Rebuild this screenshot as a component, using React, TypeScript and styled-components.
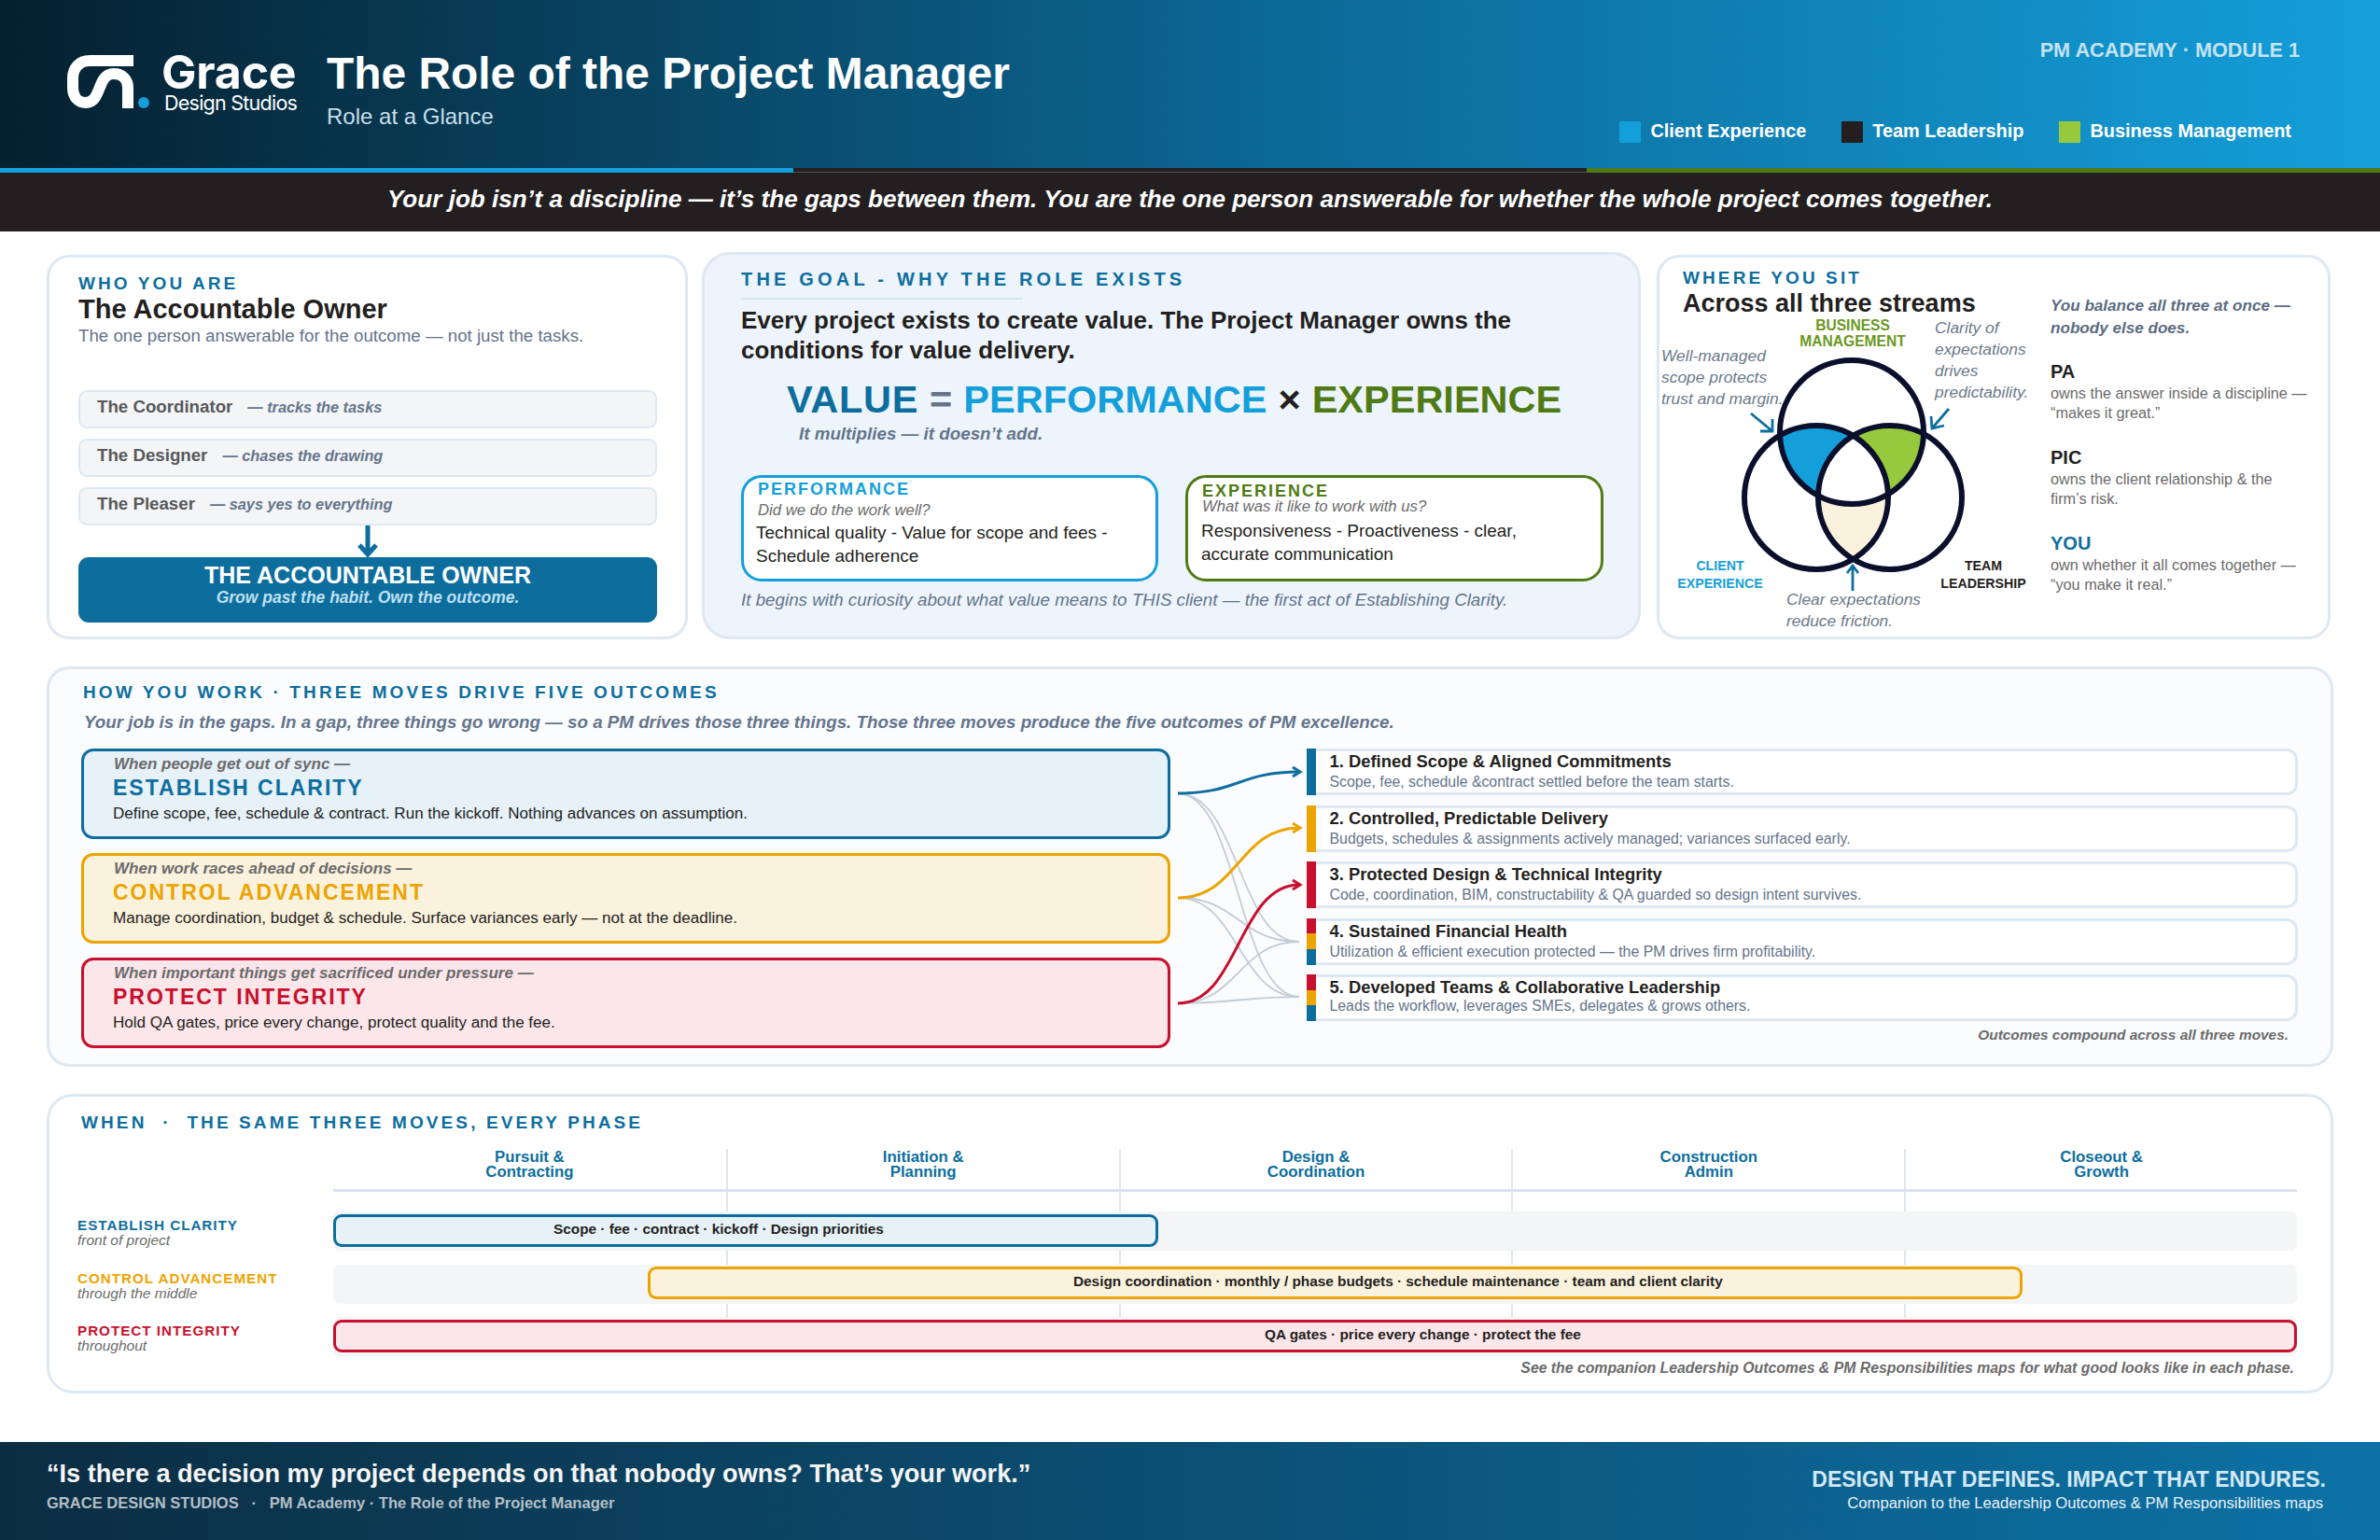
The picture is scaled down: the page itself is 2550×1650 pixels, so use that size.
import React from "react";
import styled, { createGlobalStyle } from "styled-components";

const colours = {
  ink: "#231f20",
  navy: "#0d6e9e",
  sky: "#149fdb",
  green: "#4f7a15",
  lime: "#97c93d",
  amber: "#eca400",
  red: "#c8102e",
  line: "#dde8f3",
  slate: "#64748b",
  grey: "#6b6b6b",
};

const GlobalStyle = createGlobalStyle`
  html, body {
    margin: 0;
    padding: 0;
    background: white;
  }
  * {
    box-sizing: border-box;
  }
  body {
    font-family: "Liberation Sans", Arial, sans-serif;
    color: ${colours.ink};
  }
`;

const Page = styled.div`
  width: 2550px;
  height: 1650px;
  display: flex;
  flex-direction: column;
  overflow: hidden;
`;

const Header = styled.header`
  height: 180px;
  display: flex;
  justify-content: space-between;
  padding: 0 86px 0 70px;
  background: linear-gradient(90deg, #05202f 0%, #0c6a98 55%, #149fdb 100%);
`;

const HeaderLeft = styled.div`
  display: flex;
  padding-top: 56px;
`;

const LogoMark = styled.svg`
  width: 92px;
  height: 62px;
  flex: none;
`;

const Brand = styled.div`
  width: 177px;
  margin-left: 11px;
  color: white;
`;

const BrandName = styled.div`
  font-family: Inter, sans-serif;
  font-weight: 700;
  font-size: 50px;
  line-height: 42px;
  letter-spacing: -0.2px;
`;

const BrandSub = styled.div`
  font-family: Inter, sans-serif;
  font-size: 21.5px;
  line-height: 24px;
  letter-spacing: -0.75px;
  padding-left: 3px;
`;

const TitleBlock = styled.div`
  margin-top: -7px;
`;

const PageTitle = styled.h1`
  margin: 0;
  color: white;
  font-size: 47.9px;
  line-height: 60px;
  font-weight: 700;
`;

const PageSub = styled.div`
  margin-top: 2px;
  font-size: 24px;
  line-height: 28px;
  color: #c8dfeb;
`;

const HeaderRight = styled.div`
  display: flex;
  flex-direction: column;
  align-items: flex-end;
  padding-top: 41px;
`;

const Module = styled.div`
  font-size: 21.7px;
  line-height: 26px;
  font-weight: 700;
  color: #c5e3f3;
`;

const Legend = styled.div`
  display: flex;
  gap: 38px;
  margin: 62px 9px 0 0;
`;

const LegendItem = styled.div`
  display: flex;
  gap: 10px;
  color: white;
  font-size: 19.9px;
  font-weight: 700;
  line-height: 22px;
`;

const Swatch = styled.span<{ $color: string }>`
  width: 23px;
  height: 23px;
  margin-top: 1px;
  background: ${(p) => p.$color};
`;

const Stripe = styled.div`
  height: 5px;
  display: grid;
  grid-template-columns: 1fr 1fr 1fr;
`;

const StripePart = styled.div<{ $color: string; $edge?: boolean }>`
  background: ${(p) => p.$color};
  border-bottom: ${(p) => (p.$edge ? "1px solid #4f4f4f" : "0")};
`;

const Tagline = styled.div`
  height: 63px;
  padding-bottom: 6px;
  background: ${colours.ink};
  color: white;
  font-size: 26.1px;
  font-weight: 700;
  font-style: italic;
  display: flex;
  align-items: center;
  justify-content: center;
`;

const Main = styled.main`
  flex: 1;
  padding: 22px 50px 0;
  display: flex;
  flex-direction: column;
  gap: 29px;
`;

const TopRow = styled.section`
  display: grid;
  grid-template-columns: 687px 1006px 724px;
  column-gap: 15px;
  align-items: end;
  height: 415px;
  & > :nth-child(3) {
    margin-left: 2px;
  }
`;

const Card = styled.div<{ $height: number; $bg?: string; $radius?: number }>`
  height: ${(p) => p.$height}px;
  border: 3px solid ${colours.line};
  border-radius: ${(p) => p.$radius ?? 24}px;
  background: ${(p) => p.$bg ?? "white"};
`;

const Eyebrow = styled.div<{ $wide?: boolean }>`
  font-size: ${(p) => (p.$wide ? 20 : 19)}px;
  line-height: 22px;
  font-weight: 700;
  letter-spacing: ${(p) => (p.$wide ? 4.2 : 3.1)}px;
  color: ${colours.navy};
`;

const CardTitle = styled.h2`
  margin: 0;
  font-size: 29px;
  line-height: 33px;
  font-weight: 700;
  color: ${colours.ink};
`;

const SitTitle = styled(CardTitle)`
  font-size: 27px;
`;

const WhoBody = styled.div`
  padding: 17px 30px 0 31px;
`;

const WhoSub = styled.div`
  font-size: 18.7px;
  line-height: 24px;
  color: ${colours.slate};
`;

const HabitList = styled.div`
  display: flex;
  flex-direction: column;
  gap: 11px;
  margin-top: 46px;
`;

const Habit = styled.div`
  height: 41px;
  padding: 0 0 5px 18px;
  border: 2px solid ${colours.line};
  border-radius: 9px;
  background: #f3f5f7;
  display: flex;
  align-items: center;
  gap: 16px;
`;

const HabitName = styled.span`
  font-size: 18.7px;
  font-weight: 700;
  color: #58595b;
`;

const HabitNote = styled.span`
  font-size: 16.3px;
  font-weight: 700;
  font-style: italic;
  color: ${colours.slate};
`;

const DownArrow = styled.svg`
  display: block;
  margin: 0 auto;
  width: 26px;
  height: 34px;
`;

const OwnerBlock = styled.div`
  height: 70px;
  padding-top: 6px;
  border-radius: 11px;
  background: ${colours.navy};
  text-align: center;
`;

const OwnerTitle = styled.div`
  color: white;
  font-size: 25px;
  line-height: 26px;
  font-weight: 700;
`;

const OwnerSub = styled.div`
  color: #bfe0f2;
  font-size: 17.5px;
  line-height: 22px;
  font-weight: 700;
  font-style: italic;
`;

const GoalBody = styled.div`
  padding: 15px 37px 0 39px;
`;

const Rule = styled.div`
  width: 302px;
  height: 2px;
  margin-top: 9px;
  background: #d5e4f0;
`;

const Statement = styled.p`
  margin: 6px 0 0;
  font-size: 26px;
  line-height: 32px;
  font-weight: 700;
`;

const Equation = styled.div`
  display: flex;
  gap: 12px;
  margin-top: 12px;
  padding-left: 49px;
  font-size: 41.5px;
  line-height: 50px;
  font-weight: 700;
`;

const Term = styled.span<{ $color: string; $spaced?: boolean }>`
  color: ${(p) => p.$color};
  letter-spacing: ${(p) => (p.$spaced ? 0.7 : 0)}px;
`;

const Multiplies = styled.div`
  padding-left: 62px;
  font-size: 18.8px;
  line-height: 24px;
  font-weight: 700;
  font-style: italic;
  color: ${colours.slate};
`;

const SubCards = styled.div`
  display: grid;
  grid-template-columns: 447px 448px;
  column-gap: 29px;
  margin-top: 32px;
`;

const SubCard = styled.div<{ $color: string; $tight?: boolean }>`
  height: 114px;
  padding: ${(p) => (p.$tight ? 5 : 3)}px 16px 0 15px;
  border: 3px solid ${(p) => p.$color};
  border-radius: 22px;
  background: white;
`;

const SubTitle = styled.div<{ $color: string }>`
  color: ${(p) => p.$color};
  font-size: 18px;
  line-height: 18px;
  font-weight: 700;
  letter-spacing: 2px;
`;

const SubQuestion = styled.div<{ $tight?: boolean }>`
  margin-top: ${(p) => (p.$tight ? -2 : 3.5)}px;
  font-size: 16.7px;
  line-height: 20px;
  font-style: italic;
  color: ${colours.grey};
`;

const SubText = styled.div<{ $tight?: boolean }>`
  margin: ${(p) => (p.$tight ? 3 : 1.5)}px 0 0 ${(p) => (p.$tight ? -1 : -2)}px;
  font-size: 19px;
  line-height: 25px;
`;

const GoalNote = styled.div`
  margin-top: 8px;
  font-size: 18.8px;
  line-height: 24px;
  font-style: italic;
  color: ${colours.slate};
`;

const SitLayout = styled.div`
  display: grid;
  grid-template-columns: 419px 1fr;
  height: 100%;
`;

const SitHeading = styled.div`
  padding: 11px 0 0 25px;
`;

const VennCanvas = styled.div`
  position: relative;
  height: 341px;
`;

const VennDrawing = styled.svg`
  position: absolute;
  left: 0;
  top: 0;
  width: 419px;
  height: 341px;
`;

const VennLabel = styled.div<{ $x: number; $y: number; $color: string; $size: number; $lead: number }>`
  position: absolute;
  left: ${(p) => p.$x}px;
  top: ${(p) => p.$y}px;
  transform: translateX(-50%);
  text-align: center;
  white-space: nowrap;
  color: ${(p) => p.$color};
  font-size: ${(p) => p.$size}px;
  line-height: ${(p) => p.$lead}px;
  font-weight: 700;
`;

const VennNote = styled.div<{ $x: number; $y: number }>`
  position: absolute;
  left: ${(p) => p.$x}px;
  top: ${(p) => p.$y}px;
  white-space: nowrap;
  color: #6b7a8a;
  font-size: 17.4px;
  line-height: 23px;
  font-style: italic;
`;

const Roles = styled.div`
  padding-top: 40px;
`;

const Balance = styled.div`
  margin-bottom: 23px;
  font-size: 17.1px;
  line-height: 23.5px;
  font-weight: 700;
  font-style: italic;
  color: #5b6b7f;
`;

const Role = styled.div`
  margin-bottom: 25px;
`;

const RoleName = styled.div<{ $color?: string }>`
  font-size: 20px;
  line-height: 24px;
  font-weight: 700;
  color: ${(p) => p.$color ?? colours.ink};
`;

const RoleText = styled.div`
  margin-top: 1px;
  font-size: 16.25px;
  line-height: 21px;
  color: ${colours.grey};
`;

const WorkBody = styled.div`
  padding: 14px 26px 0 34px;
`;

const Indented = styled.div`
  margin-left: 2px;
`;

const WorkLead = styled.div`
  margin: 9px 0 0 3px;
  font-size: 18.76px;
  line-height: 24px;
  font-weight: 700;
  font-style: italic;
  color: ${colours.slate};
`;

const WorkGrid = styled.div`
  display: grid;
  grid-template-columns: 1167px 146px 1062px;
  margin-top: 16px;
`;

const Moves = styled.div`
  display: flex;
  flex-direction: column;
  gap: 15px;
`;

const Move = styled.div<{ $color: string; $bg: string }>`
  height: 97px;
  padding: 3px 0 0 31px;
  border: 3px solid ${(p) => p.$color};
  border-radius: 13px;
  background: ${(p) => p.$bg};
`;

const MoveWhen = styled.div`
  padding-left: 1px;
  font-size: 17px;
  line-height: 22px;
  font-weight: 700;
  font-style: italic;
  color: ${colours.grey};
`;

const MoveTitle = styled.div<{ $color: string }>`
  color: ${(p) => p.$color};
  font-size: 23px;
  line-height: 28px;
  font-weight: 700;
  letter-spacing: 2px;
`;

const MoveText = styled.div`
  margin-top: 2px;
  font-size: 17.06px;
  line-height: 24px;
`;

const Connectors = styled.svg`
  display: block;
  width: 146px;
  height: 321px;
`;

const OutcomeList = styled.div`
  display: flex;
  flex-direction: column;
  gap: 10.5px;
`;

const Outcome = styled.div`
  height: 50px;
  display: flex;
`;

const OutcomeBar = styled.div`
  width: 9.5px;
  flex: none;
  display: flex;
  flex-direction: column;
`;

const BarPart = styled.div<{ $color: string }>`
  flex: 1;
  background: ${(p) => p.$color};
`;

const OutcomeCard = styled.div`
  flex: 1;
  padding-left: 15px;
  border: 3px solid ${colours.line};
  border-left: 0;
  border-radius: 0 12px 12px 0;
  background: white;
`;

const OutcomeTitle = styled.div`
  font-size: 18.4px;
  line-height: 22px;
  font-weight: 700;
`;

const OutcomeText = styled.div<{ $tight?: boolean }>`
  margin-top: ${(p) => (p.$tight ? -1 : 1)}px;
  font-size: 15.85px;
  line-height: 20px;
  color: ${colours.slate};
`;

const RightNote = styled.div<{ $right: number; $size: number }>`
  padding-right: ${(p) => p.$right}px;
  text-align: right;
  font-size: ${(p) => p.$size}px;
  line-height: 22px;
  font-weight: 700;
  font-style: italic;
  color: ${colours.grey};
`;

const OutcomeNote = styled(RightNote)`
  margin-top: 4px;
`;

const WhenBody = styled.div`
  padding: 17px 0 0 29px;
`;

const WhenTitle = styled(Eyebrow)`
  margin-left: 5px;
  white-space: pre;
`;

const Timeline = styled.div`
  display: grid;
  grid-template-columns: 275px 2104px;
  margin-top: 17px;
`;

const PhaseHead = styled.div`
  grid-column: 2;
  display: grid;
  grid-template-columns: repeat(5, 1fr);
  height: 46px;
  border-bottom: 3px solid #d5e4f0;
`;

const Phase = styled.div<{ $first?: boolean }>`
  padding-top: 1px;
  border-left: ${(p) => (p.$first ? "0" : "2px solid #dfe6ee")};
  text-align: center;
  white-space: pre-line;
  color: ${colours.navy};
  font-size: 16.8px;
  line-height: 15.5px;
  font-weight: 700;
`;

const RowLabels = styled.div`
  display: flex;
  flex-direction: column;
  gap: 14.5px;
  padding-top: 21px;
`;

const RowLabel = styled.div`
  height: 42px;
  padding: 7px 0 0 1px;
`;

const RowName = styled.div<{ $color: string }>`
  color: ${(p) => p.$color};
  font-size: 15.2px;
  line-height: 16px;
  font-weight: 700;
  letter-spacing: 1px;
`;

const RowSub = styled.div`
  font-size: 15.5px;
  line-height: 16px;
  font-style: italic;
  color: ${colours.grey};
`;

const TrackArea = styled.div`
  position: relative;
  display: flex;
  flex-direction: column;
  gap: 14.5px;
  padding-top: 21px;
`;

const GridLines = styled.div`
  position: absolute;
  inset: 0;
  display: grid;
  grid-template-columns: repeat(5, 1fr);
`;

const GridLine = styled.div<{ $first?: boolean }>`
  border-left: ${(p) => (p.$first ? "0" : "2px solid #dfe6ee")};
`;

const Track = styled.div`
  position: relative;
  height: 42px;
  padding-top: 2.5px;
  border-radius: 7px;
  background: #f3f5f7;
`;

const PhaseBar = styled.div<{ $left: number; $width: number; $pad: number; $color: string; $bg: string }>`
  width: ${(p) => p.$width}px;
  height: 35px;
  margin-left: ${(p) => p.$left}px;
  padding: 0 0 3px ${(p) => p.$pad}px;
  border: 3px solid ${(p) => p.$color};
  border-radius: 9px;
  background: ${(p) => p.$bg};
  display: flex;
  align-items: center;
  font-size: 15.35px;
  font-weight: 700;
`;

const WhenNote = styled(RightNote)`
  margin-top: 2px;
`;

const Footer = styled.footer`
  height: 105px;
  display: flex;
  justify-content: space-between;
  padding: 0 58px 0 50px;
  background: linear-gradient(90deg, #0b2d42 0%, #0c72a6 100%);
`;

const FootLeft = styled.div`
  padding-top: 16px;
`;

const FootQuote = styled.div`
  color: #f5f5f5;
  font-size: 27.1px;
  line-height: 36px;
  font-weight: 700;
`;

const FootMeta = styled.div`
  margin-top: 3px;
  white-space: pre;
  color: #b4bfc6;
  font-size: 16.55px;
  line-height: 22px;
  font-weight: 700;
`;

const FootRight = styled.div`
  padding-top: 25px;
  text-align: right;
`;

const FootMotto = styled.div`
  color: #d3e8f4;
  font-size: 23px;
  line-height: 30px;
  font-weight: 700;
`;

const FootCompanion = styled.div`
  margin: 0 3px 0 0;
  color: #e8f2f8;
  font-size: 16.65px;
  line-height: 22px;
`;

const legend = [
  { label: "Client Experience", color: colours.sky },
  { label: "Team Leadership", color: colours.ink },
  { label: "Business Management", color: colours.lime },
];

const habits = [
  { name: "The Coordinator", note: "— tracks the tasks" },
  { name: "The Designer", note: "— chases the drawing" },
  { name: "The Pleaser", note: "— says yes to everything" },
];

const roles = [
  {
    name: "PA",
    text: ["owns the answer inside a discipline —", "“makes it great.”"],
  },
  {
    name: "PIC",
    text: ["owns the client relationship & the", "firm’s risk."],
  },
  {
    name: "YOU",
    color: colours.navy,
    text: ["own whether it all comes together —", "“you make it real.”"],
  },
];

const moves = [
  {
    when: "When people get out of sync —",
    title: "ESTABLISH CLARITY",
    text: "Define scope, fee, schedule & contract. Run the kickoff. Nothing advances on assumption.",
    color: colours.navy,
    bg: "#e6f1f8",
  },
  {
    when: "When work races ahead of decisions —",
    title: "CONTROL ADVANCEMENT",
    text: "Manage coordination, budget & schedule. Surface variances early — not at the deadline.",
    color: colours.amber,
    bg: "#fbf2de",
  },
  {
    when: "When important things get sacrificed under pressure —",
    title: "PROTECT INTEGRITY",
    text: "Hold QA gates, price every change, protect quality and the fee.",
    color: colours.red,
    bg: "#fbe6ea",
  },
];

const allMoves = [colours.red, colours.amber, colours.navy];

const outcomes = [
  {
    title: "1. Defined Scope & Aligned Commitments",
    text: "Scope, fee, schedule &contract settled before the team starts.",
    bars: [colours.navy],
  },
  {
    title: "2. Controlled, Predictable Delivery",
    text: "Budgets, schedules & assignments actively managed; variances surfaced early.",
    bars: [colours.amber],
  },
  {
    title: "3. Protected Design & Technical Integrity",
    text: "Code, coordination, BIM, constructability & QA guarded so design intent survives.",
    bars: [colours.red],
  },
  {
    title: "4. Sustained Financial Health",
    text: "Utilization & efficient execution protected — the PM drives firm profitability.",
    bars: allMoves,
  },
  {
    title: "5. Developed Teams & Collaborative Leadership",
    text: "Leads the workflow, leverages SMEs, delegates & grows others.",
    bars: allMoves,
    tight: true,
  },
];

const phases = [
  "Pursuit &\nContracting",
  "Initiation &\nPlanning",
  "Design &\nCoordination",
  "Construction\nAdmin",
  "Closeout &\nGrowth",
];

const rows = [
  {
    name: "ESTABLISH CLARITY",
    sub: "front of project",
    text: "Scope · fee · contract · kickoff · Design priorities",
    color: colours.navy,
    bg: "#e6f1f8",
    left: 0,
    width: 884,
    pad: 233,
  },
  {
    name: "CONTROL ADVANCEMENT",
    sub: "through the middle",
    text: "Design coordination · monthly / phase budgets · schedule maintenance · team and client clarity",
    color: colours.amber,
    bg: "#fbf2de",
    left: 337,
    width: 1473,
    pad: 453,
  },
  {
    name: "PROTECT INTEGRITY",
    sub: "throughout",
    text: "QA gates · price every change · protect the fee",
    color: colours.red,
    bg: "#fbe6ea",
    left: 0,
    width: 2104,
    pad: 995,
  },
];

const flow = (y0: number, y1: number, x1: number) =>
  `M8 ${y0} C73 ${y0} 73 ${y1} ${x1} ${y1}`;

const Logo = () => (
  <LogoMark viewBox="70 56 92 62">
    <path
      d="M143 65 H96 C85 65 78 73 78 84 V94 C78 104 84 110 92 110 C102 110 104 100 108 91 C111 83 115 79 122 79 C131 79 137 85 137 94 V116"
      fill="none"
      stroke="white"
      strokeWidth="12"
    />
    <circle cx="154" cy="110" r="6" fill={colours.sky} />
  </LogoMark>
);

const Venn = () => (
  <VennDrawing viewBox="0 0 419 341">
    <defs>
      <clipPath id="clipTop">
        <circle cx="206" cy="121" r="77" />
      </clipPath>
      <clipPath id="clipRight">
        <circle cx="247" cy="191" r="77" />
      </clipPath>
    </defs>
    <g clipPath="url(#clipTop)">
      <circle cx="168" cy="191" r="77" fill={colours.sky} />
      <circle cx="247" cy="191" r="77" fill={colours.lime} />
    </g>
    <g clipPath="url(#clipRight)">
      <circle cx="168" cy="191" r="77" fill="#fbf2de" />
      <g clipPath="url(#clipTop)">
        <circle cx="168" cy="191" r="77" fill="white" />
      </g>
    </g>
    <g fill="none" stroke="#0a0f2c" strokeWidth="6">
      <circle cx="206" cy="121" r="77" />
      <circle cx="168" cy="191" r="77" />
      <circle cx="247" cy="191" r="77" />
    </g>
    <g fill="none" stroke={colours.navy} strokeWidth="2.8">
      <path d="M98 101 L121 120 M108 120 H121 V107" />
      <path d="M310 96 L292 117 M291 104 L292 117 L305 114" />
      <path d="M207 291 V264 M201 272 L207 264 L213 272" />
    </g>
  </VennDrawing>
);

const App = () => (
  <Page>
    <GlobalStyle />
    <Header>
      <HeaderLeft>
        <Logo />
        <Brand>
          <BrandName>Grace</BrandName>
          <BrandSub>Design Studios</BrandSub>
        </Brand>
        <TitleBlock>
          <PageTitle>The Role of the Project Manager</PageTitle>
          <PageSub>Role at a Glance</PageSub>
        </TitleBlock>
      </HeaderLeft>
      <HeaderRight>
        <Module>PM ACADEMY · MODULE 1</Module>
        <Legend>
          {legend.map((item) => (
            <LegendItem key={item.label}>
              <Swatch $color={item.color} />
              {item.label}
            </LegendItem>
          ))}
        </Legend>
      </HeaderRight>
    </Header>
    <Stripe>
      <StripePart $color={colours.sky} />
      <StripePart $color={colours.ink} $edge />
      <StripePart $color={colours.green} />
    </Stripe>
    <Tagline>
      Your job isn’t a discipline — it’s the gaps between them. You are the one
      person answerable for whether the whole project comes together.
    </Tagline>

    <Main>
      <TopRow>
        <Card $height={412}>
          <WhoBody>
            <Eyebrow>WHO YOU ARE</Eyebrow>
            <CardTitle>The Accountable Owner</CardTitle>
            <WhoSub>The one person answerable for the outcome — not just the tasks.</WhoSub>
            <HabitList>
              {habits.map((h) => (
                <Habit key={h.name}>
                  <HabitName>{h.name}</HabitName>
                  <HabitNote>{h.note}</HabitNote>
                </Habit>
              ))}
            </HabitList>
            <DownArrow viewBox="0 0 26 34">
              <path
                d="M13 0 V31 M4 21 L13 31 L22 21"
                fill="none"
                stroke={colours.navy}
                strokeWidth="5"
              />
            </DownArrow>
            <OwnerBlock>
              <OwnerTitle>THE ACCOUNTABLE OWNER</OwnerTitle>
              <OwnerSub>Grow past the habit. Own the outcome.</OwnerSub>
            </OwnerBlock>
          </WhoBody>
        </Card>

        <Card $height={415} $bg="#edf4fb" $radius={30}>
          <GoalBody>
            <Eyebrow $wide>THE GOAL - WHY THE ROLE EXISTS</Eyebrow>
            <Rule />
            <Statement>
              Every project exists to create value. The Project Manager owns the
              <br />
              conditions for value delivery.
            </Statement>
            <Equation>
              <Term $color={colours.navy} $spaced>VALUE</Term>
              <Term $color={colours.slate}>=</Term>
              <Term $color={colours.sky}>PERFORMANCE</Term>
              <Term $color={colours.ink}>×</Term>
              <Term $color={colours.green}>EXPERIENCE</Term>
            </Equation>
            <Multiplies>It multiplies — it doesn’t add.</Multiplies>
            <SubCards>
              <SubCard $color={colours.sky}>
                <SubTitle $color={colours.sky}>PERFORMANCE</SubTitle>
                <SubQuestion>Did we do the work well?</SubQuestion>
                <SubText>
                  Technical quality - Value for scope and fees -
                  <br />
                  Schedule adherence
                </SubText>
              </SubCard>
              <SubCard $color={colours.green} $tight>
                <SubTitle $color={colours.green}>EXPERIENCE</SubTitle>
                <SubQuestion $tight>What was it like to work with us?</SubQuestion>
                <SubText $tight>
                  Responsiveness - Proactiveness - clear,
                  <br />
                  accurate communication
                </SubText>
              </SubCard>
            </SubCards>
            <GoalNote>
              It begins with curiosity about what value means to THIS client — the
              first act of Establishing Clarity.
            </GoalNote>
          </GoalBody>
        </Card>

        <Card $height={412}>
          <SitLayout>
            <div>
              <SitHeading>
                <Eyebrow>WHERE YOU SIT</Eyebrow>
                <SitTitle>Across all three streams</SitTitle>
              </SitHeading>
              <VennCanvas>
                <Venn />
                <VennLabel $x={207} $y={-2} $color="#6a9a1f" $size={15.6} $lead={17}>
                  BUSINESS
                  <br />
                  MANAGEMENT
                </VennLabel>
                <VennNote $x={2} $y={28}>
                  Well-managed
                  <br />
                  scope protects
                  <br />
                  trust and margin.
                </VennNote>
                <VennNote $x={295} $y={-2}>
                  Clarity of
                  <br />
                  expectations
                  <br />
                  drives
                  <br />
                  predictability.
                </VennNote>
                <VennLabel $x={65} $y={255} $color={colours.sky} $size={14.2} $lead={19}>
                  CLIENT
                  <br />
                  EXPERIENCE
                </VennLabel>
                <VennLabel $x={347} $y={255} $color={colours.ink} $size={14.2} $lead={19}>
                  TEAM
                  <br />
                  LEADERSHIP
                </VennLabel>
                <VennNote $x={136} $y={289}>
                  Clear expectations
                  <br />
                  reduce friction.
                </VennNote>
              </VennCanvas>
            </div>
            <Roles>
              <Balance>
                You balance all three at once —
                <br />
                nobody else does.
              </Balance>
              {roles.map((r) => (
                <Role key={r.name}>
                  <RoleName $color={r.color}>{r.name}</RoleName>
                  <RoleText>
                    {r.text[0]}
                    <br />
                    {r.text[1]}
                  </RoleText>
                </Role>
              ))}
            </Roles>
          </SitLayout>
        </Card>
      </TopRow>

      <Card $height={429} $bg="#fafcfe">
        <WorkBody>
          <Indented>
            <Eyebrow>HOW YOU WORK · THREE MOVES DRIVE FIVE OUTCOMES</Eyebrow>
          </Indented>
          <WorkLead>
            Your job is in the gaps. In a gap, three things go wrong — so a PM drives
            those three things. Those three moves produce the five outcomes of PM
            excellence.
          </WorkLead>
          <WorkGrid>
            <Moves>
              {moves.map((m) => (
                <Move key={m.title} $color={m.color} $bg={m.bg}>
                  <MoveWhen>{m.when}</MoveWhen>
                  <MoveTitle $color={m.color}>{m.title}</MoveTitle>
                  <MoveText>{m.text}</MoveText>
                </Move>
              ))}
            </Moves>
            <Connectors viewBox="0 0 146 321">
              <g fill="none" stroke="#c3ccd6" strokeWidth="1.8">
                <path d={flow(48, 207, 138)} />
                <path d={flow(48, 266, 138)} />
                <path d={flow(160, 207, 138)} />
                <path d={flow(160, 266, 138)} />
                <path d={flow(273, 207, 138)} />
                <path d={flow(273, 266, 138)} />
              </g>
              <g fill="none" strokeWidth="3">
                <g stroke={colours.navy}>
                  <path d={flow(48, 25, 138)} />
                  <path d="M131 20 L139 25 L131 30" />
                </g>
                <g stroke={colours.amber}>
                  <path d={flow(160, 85, 138)} />
                  <path d="M131 80 L139 85 L131 90" />
                </g>
                <g stroke={colours.red}>
                  <path d={flow(273, 146, 138)} />
                  <path d="M131 141 L139 146 L131 151" />
                </g>
              </g>
            </Connectors>
            <div>
              <OutcomeList>
                {outcomes.map((o) => (
                  <Outcome key={o.title}>
                    <OutcomeBar>
                      {o.bars.map((color) => (
                        <BarPart key={color} $color={color} />
                      ))}
                    </OutcomeBar>
                    <OutcomeCard>
                      <OutcomeTitle>{o.title}</OutcomeTitle>
                      <OutcomeText $tight={o.tight}>{o.text}</OutcomeText>
                    </OutcomeCard>
                  </Outcome>
                ))}
              </OutcomeList>
              <OutcomeNote $right={10} $size={15.4}>
                Outcomes compound across all three moves.
              </OutcomeNote>
            </div>
          </WorkGrid>
        </WorkBody>
      </Card>

      <Card $height={321} $radius={28}>
        <WhenBody>
          <WhenTitle>{"WHEN  ·  THE SAME THREE MOVES, EVERY PHASE"}</WhenTitle>
          <Timeline>
            <PhaseHead>
              {phases.map((p, i) => (
                <Phase key={p} $first={i === 0}>
                  {p}
                </Phase>
              ))}
            </PhaseHead>
            <RowLabels>
              {rows.map((r) => (
                <RowLabel key={r.name}>
                  <RowName $color={r.color}>{r.name}</RowName>
                  <RowSub>{r.sub}</RowSub>
                </RowLabel>
              ))}
            </RowLabels>
            <TrackArea>
              <GridLines>
                {phases.map((p, i) => (
                  <GridLine key={p} $first={i === 0} />
                ))}
              </GridLines>
              {rows.map((r) => (
                <Track key={r.name}>
                  <PhaseBar
                    $left={r.left}
                    $width={r.width}
                    $pad={r.pad}
                    $color={r.color}
                    $bg={r.bg}
                  >
                    {r.text}
                  </PhaseBar>
                </Track>
              ))}
            </TrackArea>
          </Timeline>
          <WhenNote $right={39} $size={15.8}>
            See the companion Leadership Outcomes &amp; PM Responsibilities maps for what
            good looks like in each phase.
          </WhenNote>
        </WhenBody>
      </Card>
    </Main>

    <Footer>
      <FootLeft>
        <FootQuote>“Is there a decision my project depends on that nobody owns? That’s your work.”</FootQuote>
        <FootMeta>{"GRACE DESIGN STUDIOS   ·   PM Academy · The Role of the Project Manager"}</FootMeta>
      </FootLeft>
      <FootRight>
        <FootMotto>DESIGN THAT DEFINES. IMPACT THAT ENDURES.</FootMotto>
        <FootCompanion>Companion to the Leadership Outcomes &amp; PM Responsibilities maps</FootCompanion>
      </FootRight>
    </Footer>
  </Page>
);

export default App;
